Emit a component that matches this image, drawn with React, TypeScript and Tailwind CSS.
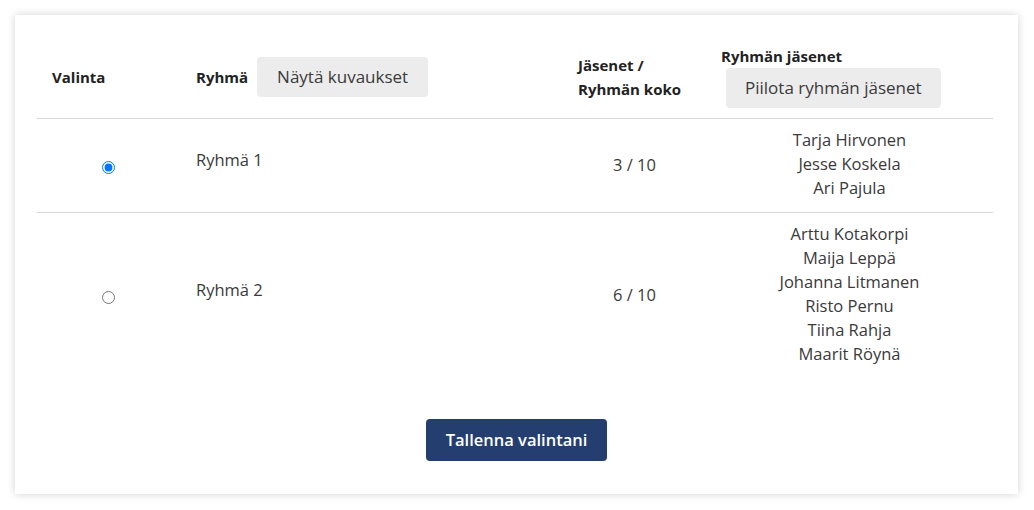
import React, { useState } from "react";

const groups = [
  { name: "Ryhmä 1", count: "3 / 10", members: ["Tarja Hirvonen", "Jesse Koskela", "Ari Pajula"] },
  {
    name: "Ryhmä 2",
    count: "6 / 10",
    members: ["Arttu Kotakorpi", "Maija Leppä", "Johanna Litmanen", "Risto Pernu", "Tiina Rahja", "Maarit Röynä"],
  },
];

export default function App() {
  const [sel, setSel] = useState(0);
  return (
    <div className="w-[1034px] h-[510px] bg-white pt-[15px] pl-[15px]" style={{ fontFamily: "'Open Sans', 'Noto Sans', sans-serif" }}>
      <div className="w-[1003px] h-[479px] bg-white shadow-[0_0_8px_rgba(0,0,0,0.18)] px-[22px] pt-[27px]">
        <table className="w-[956px] table-fixed border-collapse text-[#3a3a3a]">
          <colgroup>
            <col className="w-[143px]" />
            <col className="w-[383px]" />
            <col className="w-[143px]" />
            <col className="w-[287px]" />
          </colgroup>
          <thead>
            <tr className="border-b border-[#d6d6d6]">
              <th className="text-left align-middle px-[15px] pt-[4px] pb-[10px] text-[15px] font-bold text-[#222]">Valinta</th>
              <th className="text-left align-middle px-[16px] pt-[4px] pb-[10px] text-[15px] font-bold text-[#222]">
                <span>Ryhmä</span>
                <button className="ml-[9px] h-[40px] px-[20px] rounded-[4px] bg-[#ececec] text-[17px] font-normal text-[#3a3a3a]">
                  Näytä kuvaukset
                </button>
              </th>
              <th className="text-left align-middle px-[15px] pt-[4px] pb-[10px] text-[15px] font-bold leading-[24px] text-[#222]">
                Jäsenet /<br />Ryhmän koko
              </th>
              <th className="text-left align-middle px-[15px] pt-[4px] pb-[10px] text-[15px] font-bold text-[#222]">
                <div className="leading-[20px]">Ryhmän jäsenet</div>
                <button className="mt-[2px] ml-[5px] h-[40px] px-[19px] rounded-[4px] bg-[#ececec] text-[17px] font-normal text-[#3a3a3a]">
                  Piilota ryhmän jäsenet
                </button>
              </th>
            </tr>
          </thead>
          <tbody>
            {groups.map((g, i) => (
              <tr key={g.name} className={i === 0 ? "border-b border-[#d6d6d6]" : ""}>
                <td className="text-center align-middle py-[10px]">
                  <input
                    type="radio"
                    name="grp"
                    checked={sel === i}
                    onChange={() => setSel(i)}
                    className="w-[13px] h-[13px] m-0 align-middle"
                  />
                </td>
                <td className="align-middle px-[16px] pt-[8px] pb-[18px] text-[16.5px]">{g.name}</td>
                <td className="align-middle text-center py-[8px] text-[16.5px]">{g.count}</td>
                <td className="align-middle text-center pt-[9px] pb-[12px] text-[16.5px] leading-[24px]">
                  {g.members.map((m) => (
                    <div key={m}>{m}</div>
                  ))}
                </td>
              </tr>
            ))}
          </tbody>
        </table>
        <div className="flex justify-center mt-[41px]">
          <button className="h-[42px] w-[181px] rounded-[4px] bg-[#243f6f] text-white text-[16.5px] font-semibold">
            Tallenna valintani
          </button>
        </div>
      </div>
    </div>
  );
}
